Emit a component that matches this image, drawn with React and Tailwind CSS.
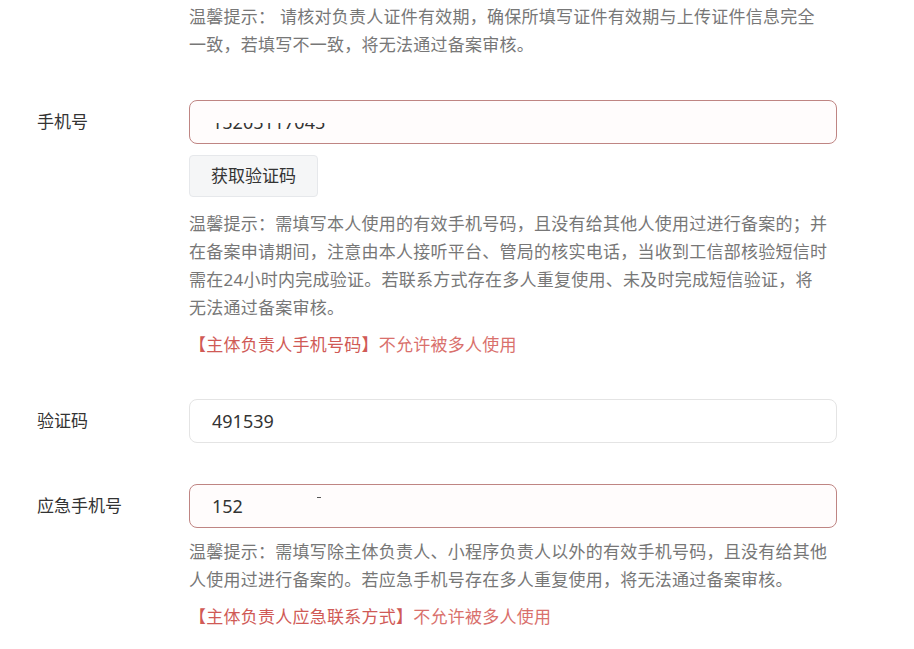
import React from 'react';

const FONT = { fontFamily: '"Noto Sans", "Noto Sans CJK SC", sans-serif' };

function Hint({ lines, className = '' }) {
  return (
    <div className={`text-[17px] leading-[28px] tracking-[0.25px] text-[#777777] ${className}`}>
      {lines.map((line) => (
        <div key={line} className="whitespace-nowrap">{line}</div>
      ))}
    </div>
  );
}

function Warn({ tag, text, className = '' }) {
  return (
    <div className={`text-[17px] leading-[28px] tracking-[0.25px] text-[#d05a56] whitespace-nowrap ${className}`}>
      {tag}
      <span className="text-[#d9706c]">{text}</span>
    </div>
  );
}

function Row({ label, children, className = '' }) {
  return (
    <div className={`flex ${className}`}>
      <div className="w-[152px] h-[44px] flex items-center text-[17px] text-[#333333] shrink-0">
        {label}
      </div>
      <div className="w-[648px]">{children}</div>
    </div>
  );
}

function Field({ value, error, children }) {
  return (
    <div
      className={`relative h-[44px] rounded-[8px] border flex items-center pl-[22px] text-[18px] text-[#333333] ${
        error ? 'border-[#bf8583] bg-[#fffcfc]' : 'border-[#e4e4e4] bg-white'
      }`}
    >
      {value}
      {children}
    </div>
  );
}

export default function App() {
  return (
    <div className="min-h-screen bg-white pl-[37px] pt-[3px]" style={FONT}>
      <Hint
        className="ml-[152px]"
        lines={[
          '温馨提示： 请核对负责人证件有效期，确保所填写证件有效期与上传证件信息完全',
          '一致，若填写不一致，将无法通过备案审核。',
        ]}
      />

      <Row label="手机号" className="mt-[41px]">
        <Field value="15205117045" error>
          {/* masked number */}
          <div className="absolute left-[14px] top-[6px] w-[140px] h-[16px] bg-[#fffcfc]" />
        </Field>
        <button className="mt-[11px] h-[42px] px-[21px] rounded-[4px] border border-[#e6e8eb] bg-[#f5f6f7] text-[17px] text-[#333333]">
          获取验证码
        </button>
        <Hint
          className="mt-[13px]"
          lines={[
            '温馨提示：需填写本人使用的有效手机号码，且没有给其他人使用过进行备案的；并',
            '在备案申请期间，注意由本人接听平台、管局的核实电话，当收到工信部核验短信时',
            '需在24小时内完成验证。若联系方式存在多人重复使用、未及时完成短信验证，将',
            '无法通过备案审核。',
          ]}
        />
        <Warn className="mt-[9px]" tag="【主体负责人手机号码】" text="不允许被多人使用" />
      </Row>

      <Row label="验证码" className="mt-[40px]">
        <Field value="491539" />
      </Row>

      <Row label="应急手机号" className="mt-[41px]">
        <Field value="152" error>
          <div className="absolute left-[127px] top-[12px] w-[4px] h-[1px] bg-[#555555]" />
        </Field>
        <Hint
          className="mt-[10px]"
          lines={[
            '温馨提示：需填写除主体负责人、小程序负责人以外的有效手机号码，且没有给其他',
            '人使用过进行备案的。若应急手机号存在多人重复使用，将无法通过备案审核。',
          ]}
        />
        <Warn className="mt-[9px]" tag="【主体负责人应急联系方式】" text="不允许被多人使用" />
      </Row>
    </div>
  );
}
